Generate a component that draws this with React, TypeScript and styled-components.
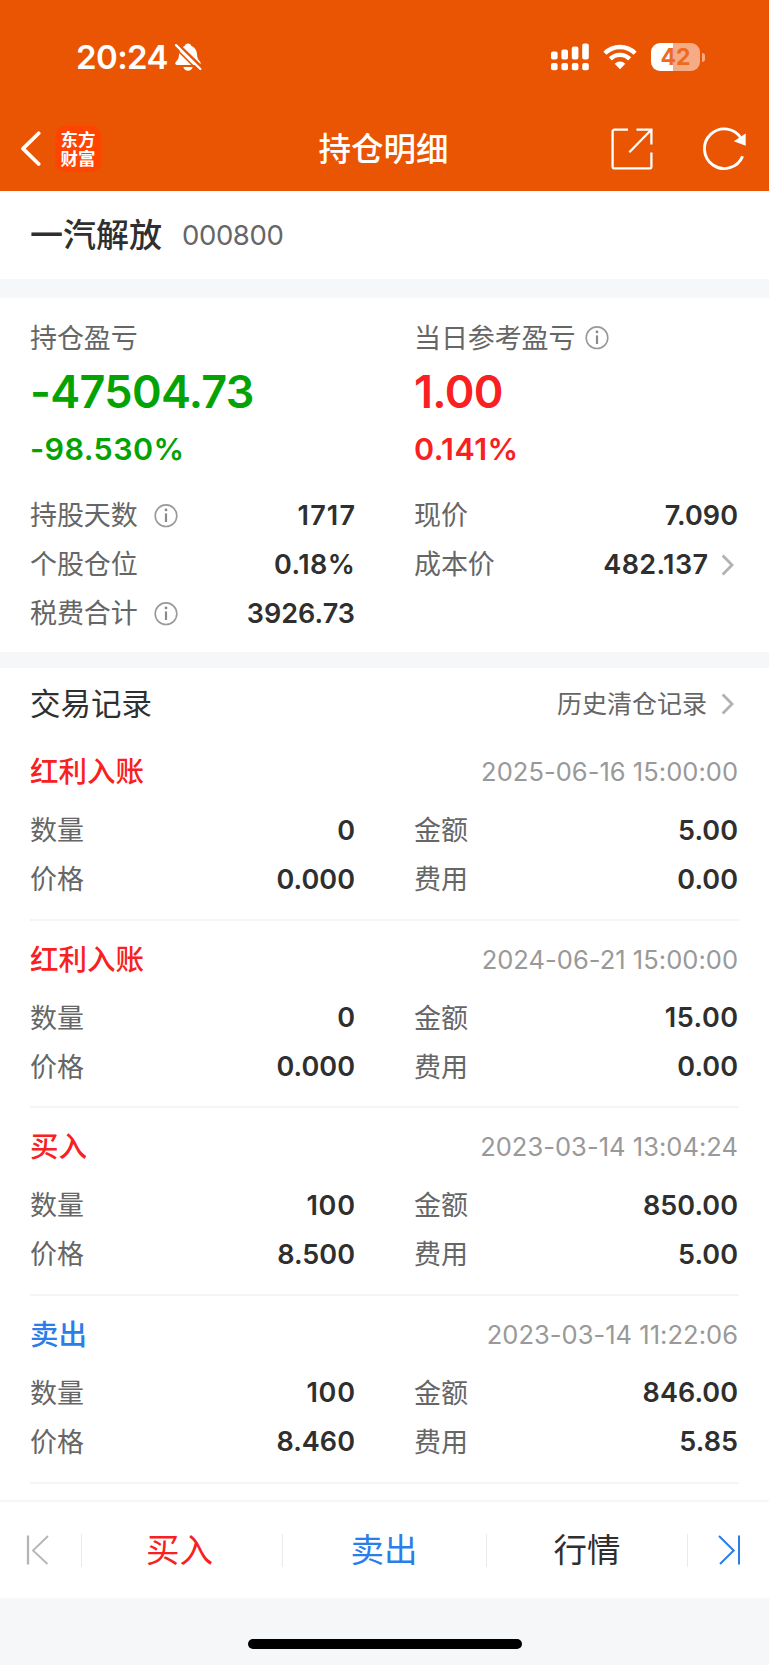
import React from "react";
import styled, { createGlobalStyle, css } from "styled-components";

const GlobalStyle = createGlobalStyle`
  * { box-sizing: border-box; }
  body { margin: 0; background: #f6f7f9; }
`;

const color = {
  brand: "#ea5504",
  up: "#f82021",
  down: "#03a303",
  sell: "#2b7de9",
  ink: "#2f2f2f",
  label: "#666666",
  muted: "#999999",
  band: "#f6f7f9",
  line: "#f4f5f6",
};

const Page = styled.div`
  width: 769px;
  height: 1665px;
  display: flex;
  flex-direction: column;
  overflow: hidden;
  background: ${color.band};
  font-family: Inter, "Noto Sans CJK SC", sans-serif;
  color: ${color.ink};
  white-space: nowrap;
`;

/* ---------- top ---------- */

const Top = styled.header`
  flex: none;
  height: 191px;
  background: ${color.brand};
  color: #fff;
`;

const StatusBar = styled.div`
  height: 106px;
  padding: 8px 64px 0 76px;
  display: flex;
  align-items: center;
  justify-content: space-between;
`;

const StatusGroup = styled.div<{ $gap: number }>`
  display: flex;
  align-items: center;
  gap: ${(p) => p.$gap}px;
`;

const Clock = styled.span`
  font-size: 33px;
  line-height: 40px;
  font-weight: 600;
  letter-spacing: -0.6px;
`;

const Battery = styled.div`
  display: flex;
  align-items: center;
  gap: 2px;
`;

const BatteryBody = styled.div`
  width: 49px;
  height: 28px;
  border-radius: 9px;
  background: linear-gradient(to right, #fff 21.5px, #f5ab83 21.5px);
  color: #ec6a22;
  font-size: 23px;
  line-height: 28px;
  font-weight: 700;
  text-align: center;
`;

const BatteryTip = styled.div`
  width: 3px;
  height: 9px;
  border-radius: 0 4px 4px 0;
  background: #f5ab83;
`;

const NavBar = styled.div`
  height: 85px;
  padding: 0 22px 0 20px;
  display: grid;
  grid-template-columns: 1fr auto 1fr;
  align-items: center;
`;

const NavSide = styled.div<{ $end?: boolean; $gap: number }>`
  display: flex;
  align-items: center;
  justify-content: ${(p) => (p.$end ? "flex-end" : "flex-start")};
  gap: ${(p) => p.$gap}px;
`;

const NavTitle = styled.h1`
  margin: 0;
  padding-top: 2px;
  font-size: 32.5px;
  line-height: 40px;
  font-weight: 500;
`;

const Logo = styled.div`
  width: 46px;
  height: 46px;
  padding: 3px 5px 0;
  border-radius: 10px;
  background: #ff4400;
  font-family: "Noto Sans CJK SC", sans-serif;
  font-size: 17.5px;
  line-height: 19px;
  font-weight: 700;
  white-space: normal;
  text-align: center;
`;

/* ---------- stock ---------- */

const Stock = styled.section`
  flex: none;
  height: 88px;
  padding: 0 30px;
  display: flex;
  align-items: center;
  gap: 20px;
  background: #fff;
`;

const StockName = styled.h2`
  margin: 0;
  font-size: 33px;
  line-height: 44px;
  font-weight: 500;
`;

const StockCode = styled.span`
  padding-bottom: 1px;
  font-size: 27.5px;
  line-height: 44px;
  letter-spacing: -0.4px;
  color: ${color.label};
`;

/* ---------- shared rows ---------- */

const Columns = styled.div`
  display: grid;
  grid-template-columns: 325px 324px;
  column-gap: 59px;
`;

const Column = styled.div`
  display: flex;
  flex-direction: column;
`;

const Row = styled.div`
  height: 49px;
  display: flex;
  align-items: center;
`;

const Label = styled.span`
  padding-top: 1px;
  font-size: 27px;
  line-height: 40px;
  letter-spacing: -0.1px;
  color: ${color.label};
`;

const Value = styled.span<{ $track: number }>`
  margin-left: auto;
  margin-right: ${(p) => -p.$track}px;
  font-size: 27px;
  line-height: 40px;
  font-weight: 600;
  letter-spacing: ${(p) => p.$track}px;
`;

const InfoSvg = styled.svg<{ $space: number }>`
  flex: none;
  margin-left: ${(p) => p.$space}px;
`;

const ArrowSvg = styled.svg`
  flex: none;
  margin: 0 4px 0 13px;
`;

/* ---------- summary ---------- */

const Summary = styled.section`
  flex: none;
  margin-top: 19px;
  height: 354px;
  padding: 18px 30px 0;
  background: #fff;
`;

const Profit = styled.div<{ $tone: "up" | "down" }>`
  height: 175px;
  color: ${(p) => color[p.$tone]};
`;

const ProfitLabel = styled.div`
  height: 44px;
  display: flex;
  align-items: center;
`;

const Amount = styled.div`
  font-size: 45px;
  line-height: 64px;
  font-weight: 600;
  letter-spacing: -0.7px;
`;

const Percent = styled.div`
  font-size: 30.5px;
  line-height: 50px;
  font-weight: 600;
  letter-spacing: 0.4px;
`;

/* ---------- records ---------- */

const Records = styled.section`
  flex: none;
  margin-top: 16px;
  height: 832px;
  padding: 0 30px;
  background: #fff;
`;

const RecordsHead = styled.div`
  height: 71px;
  padding-right: 1px;
  display: flex;
  align-items: center;
  justify-content: space-between;
`;

const RecordsTitle = styled.h3`
  margin: 0;
  font-size: 30.5px;
  line-height: 44px;
  font-weight: 400;
`;

const History = styled.a`
  display: flex;
  align-items: center;
  font-size: 25px;
  line-height: 40px;
  color: ${color.label};
  & > ${ArrowSvg} { margin-left: 14px; }
`;

const RecordList = styled.div`
  margin-top: -6px;
`;

const Record = styled.article`
  height: 187.67px;
  padding-top: 19px;
  border-bottom: 2px solid ${color.line};
  display: flex;
  flex-direction: column;
  & > ${Columns} { margin-top: 14px; }
`;

const RecordHead = styled.div`
  height: 40px;
  padding-right: 1px;
  display: flex;
  align-items: center;
  justify-content: space-between;
`;

const RecordType = styled.span<{ $tone: "up" | "sell" }>`
  font-size: 28.5px;
  line-height: 40px;
  font-weight: 500;
  color: ${(p) => color[p.$tone]};
`;

const RecordTime = styled.time`
  font-size: 25.5px;
  line-height: 40px;
  letter-spacing: 0.03px;
  color: ${color.muted};
`;

/* ---------- bottom ---------- */

const TabBar = styled.nav`
  flex: none;
  height: 98px;
  border-top: 2px solid #f5f6f7;
  background: #fff;
  display: grid;
  grid-template-columns: 82px 201px 204px 201px 81px;
  align-items: center;
`;

const Tab = styled.button<{ $tint?: string; $last?: boolean; $inset?: number }>`
  height: 33px;
  padding: 0 ${(p) => p.$inset ?? 0}px 0 0;
  border: 0;
  background: none;
  display: flex;
  align-items: center;
  justify-content: center;
  font: 400 33.5px/33px Inter, "Noto Sans CJK SC", sans-serif;
  color: ${(p) => p.$tint ?? color.ink};
  ${(p) => !p.$last && css`border-right: 1px solid #e9eaec;`}
`;

const HomeArea = styled.footer`
  flex: none;
  height: 67px;
  padding-top: 41px;
  display: flex;
  justify-content: center;
`;

const HomeIndicator = styled.div`
  width: 274px;
  height: 10px;
  border-radius: 5px;
  background: #000;
`;

/* ---------- icons ---------- */

const BellOff = () => (
  <svg width="28" height="30" viewBox="0 0 28 30">
    <path d="M14 1.5c1.8 0 3 1 3.4 2.4 3.600 1.300 5.400 4.400 5.600 8.300.2 3.800 1.200 5.600 3.100 7.600.8.9 1 3.200-.9 3.200H2.900c-1.900 0-2.100-2-.9-3.200C3.900 17.800 4.900 16 5.100 12.200c.2-3.900 1.900-7 5.500-8.300C11 2.500 12.200 1.500 14 1.500z" fill="#fff" />
    <path d="M9.300 25h9.400c-.6 2.400-2.400 3.800-4.700 3.800S9.900 27.400 9.300 25z" fill="#fff" />
    <path d="M2.800 1.300 28.200 25.900" stroke={color.brand} strokeWidth="3" />
    <path d="M2 3.100 26.400 27" stroke="#fff" strokeWidth="2.2" strokeLinecap="round" />
    <path d="M0 4.800 24 28.800" stroke={color.brand} strokeWidth="1.6" />
  </svg>
);

const Signal = () => (
  <svg width="38" height="28" viewBox="0 0 38 28" fill="#fff">
    {[8.500, 6.500, 3.500, 0.500].map((y, i) => (
      <React.Fragment key={y}>
        <rect x={i * 10.400} y={y} width="6.600" height={16.500 - y} rx="2" />
        <rect x={i * 10.400} y="20" width="6.600" height="7.300" rx="2" />
      </React.Fragment>
    ))}
  </svg>
);

const Wifi = () => (
  <svg width="34" height="26" viewBox="0 0 34 26">
    <g fill="none" stroke="#fff" strokeWidth="4.400">
      <path d="M1.900 9.200a21.400 21.400 0 0 1 30.200 0" />
      <path d="M7.300 14.900a13.700 13.700 0 0 1 19.400 0" />
    </g>
    <path d="M11.700 19.700a7.500 7.500 0 0 1 10.600 0L17 25.200z" fill="#fff" />
  </svg>
);

const Back = () => (
  <svg width="21" height="36" viewBox="0 0 21 36">
    <path d="M18.700 2.200 3 17.600l15.700 15.400" fill="none" stroke="#fff" strokeWidth="3.700" strokeLinecap="round" strokeLinejoin="round" />
  </svg>
);

const Share = () => (
  <svg width="42" height="42" viewBox="0 0 42 42" fill="none" stroke="#fff" strokeWidth="2.300">
    <path d="M17 1.600H3.600a2 2 0 0 0-2 2v34.800a2 2 0 0 0 2 2h34.800a2 2 0 0 0 2-2V24.500" />
    <path d="M25.500 1.600h14.900V16.500M39.800 2.200 18.300 24.300" />
  </svg>
);

const Refresh = () => (
  <svg width="46" height="46" viewBox="0 0 46 46">
    <path d="M41.600 30.200a19.800 19.800 0 1 1-1.200-17.400" fill="none" stroke="#fff" strokeWidth="2.900" />
    <path d="M32.800 15.200 44.700 7.500v12.200z" fill="#fff" />
  </svg>
);

const Info = ({ space }: { space: number }) => (
  <InfoSvg $space={space} width="24" height="24" viewBox="0 0 24 24">
    <circle cx="12" cy="11.700" r="10.800" fill="none" stroke="#999" strokeWidth="1.600" />
    <path d="M12 9.400v8.600" stroke="#8a8a8a" strokeWidth="2.200" />
    <circle cx="12" cy="5.900" r="1.400" fill="#8a8a8a" />
  </InfoSvg>
);

const Arrow = () => (
  <ArrowSvg width="13" height="22" viewBox="0 0 13 22">
    <path d="M1.700 1.500 11 11l-9.300 9.500" fill="none" stroke="#b2b2b2" strokeWidth="2.800" />
  </ArrowSvg>
);

const First = () => (
  <svg width="24" height="30" viewBox="0 0 24 30">
    <path d="M3 .5v29" stroke="#b5b5b5" strokeWidth="2.300" />
    <path d="M23 1 8 15.500 22.500 29" fill="none" stroke="#b5b5b5" strokeWidth="1.800" />
  </svg>
);

const Last = () => (
  <svg width="24" height="30" viewBox="0 0 24 30" fill="none" stroke={color.sell} strokeWidth="2">
    <path d="M22 .5v29M2 1l14.700 14.500L3 29" />
  </svg>
);

/* ---------- data ---------- */

type RecordData = {
  type: string;
  tone: "up" | "sell";
  time: string;
  count: string;
  price: string;
  amount: string;
  fee: string;
};

const records: RecordData[] = [
  { type: "红利入账", tone: "up", time: "2025-06-16 15:00:00", count: "0", price: "0.000", amount: "5.00", fee: "0.00" },
  { type: "红利入账", tone: "up", time: "2024-06-21 15:00:00", count: "0", price: "0.000", amount: "15.00", fee: "0.00" },
  { type: "买入", tone: "up", time: "2023-03-14 13:04:24", count: "100", price: "8.500", amount: "850.00", fee: "5.00" },
  { type: "卖出", tone: "sell", time: "2023-03-14 11:22:06", count: "100", price: "8.460", amount: "846.00", fee: "5.85" },
];

/* The digit 1 is narrow, so figures that hold it are spaced a little wider. */
const tracking = (value: string) =>
  0.05 + (2.2 * (value.split("1").length - 1)) / value.length;

type FieldProps = { label: string; value: string; info?: boolean; link?: boolean };

const Field = ({ label, value, info, link }: FieldProps) => (
  <Row>
    <Label>{label}</Label>
    {info && <Info space={16} />}
    <Value $track={tracking(value)}>{value}</Value>
    {link && <Arrow />}
  </Row>
);

export default function App() {
  return (
    <>
      <GlobalStyle />
      <Page>
        <Top>
          <StatusBar>
            <StatusGroup $gap={6}>
              <Clock>20:24</Clock>
              <BellOff />
            </StatusGroup>
            <StatusGroup $gap={14}>
              <Signal />
              <Wifi />
              <Battery>
                <BatteryBody>42</BatteryBody>
                <BatteryTip />
              </Battery>
            </StatusGroup>
          </StatusBar>
          <NavBar>
            <NavSide $gap={14}>
              <Back />
              <Logo>东方财富</Logo>
            </NavSide>
            <NavTitle>持仓明细</NavTitle>
            <NavSide $end $gap={48}>
              <Share />
              <Refresh />
            </NavSide>
          </NavBar>
        </Top>

        <Stock>
          <StockName>一汽解放</StockName>
          <StockCode>000800</StockCode>
        </Stock>

        <Summary>
          <Columns>
            <Column>
              <Profit $tone="down">
                <ProfitLabel><Label>持仓盈亏</Label></ProfitLabel>
                <Amount>-47504.73</Amount>
                <Percent>-98.530%</Percent>
              </Profit>
              <Field label="持股天数" value="1717" info />
              <Field label="个股仓位" value="0.18%" />
              <Field label="税费合计" value="3926.73" info />
            </Column>
            <Column>
              <Profit $tone="up">
                <ProfitLabel><Label>当日参考盈亏</Label><Info space={10} /></ProfitLabel>
                <Amount>1.00</Amount>
                <Percent>0.141%</Percent>
              </Profit>
              <Field label="现价" value="7.090" />
              <Field label="成本价" value="482.137" link />
            </Column>
          </Columns>
        </Summary>

        <Records>
          <RecordsHead>
            <RecordsTitle>交易记录</RecordsTitle>
            <History>历史清仓记录<Arrow /></History>
          </RecordsHead>
          <RecordList>
            {records.map((r) => (
              <Record key={r.time}>
                <RecordHead>
                  <RecordType $tone={r.tone}>{r.type}</RecordType>
                  <RecordTime>{r.time}</RecordTime>
                </RecordHead>
                <Columns>
                  <Column>
                    <Field label="数量" value={r.count} />
                    <Field label="价格" value={r.price} />
                  </Column>
                  <Column>
                    <Field label="金额" value={r.amount} />
                    <Field label="费用" value={r.fee} />
                  </Column>
                </Columns>
              </Record>
            ))}
          </RecordList>
        </Records>

        <TabBar>
          <Tab $inset={7}><First /></Tab>
          <Tab $tint={color.up} $inset={5}>买入</Tab>
          <Tab $tint={color.sell} $inset={1}>卖出</Tab>
          <Tab>行情</Tab>
          <Tab $last><Last /></Tab>
        </TabBar>
        <HomeArea><HomeIndicator /></HomeArea>
      </Page>
    </>
  );
}
